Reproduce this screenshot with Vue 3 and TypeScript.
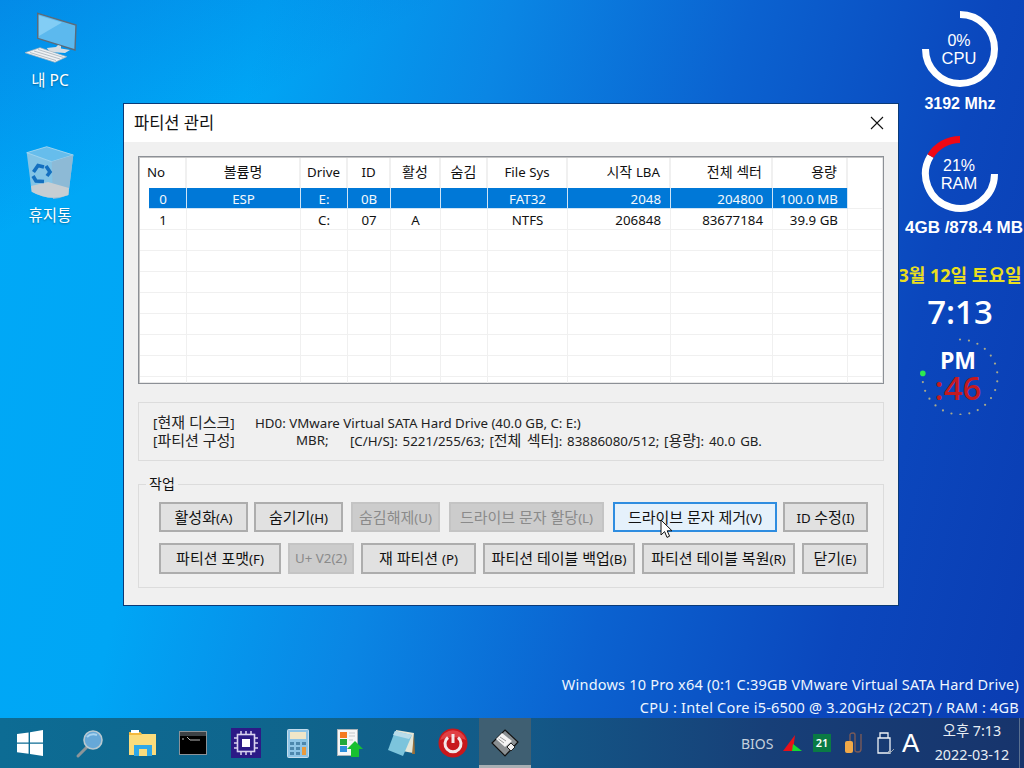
<script setup lang="ts">
import { h } from "vue";

interface Col { title: string; align: string }
interface Btn { label: string; width: number; gap: number; disabled?: boolean; hover?: boolean }

const cols: Col[] = [
  { title: "No", align: "no" },
  { title: "볼륨명", align: "center" },
  { title: "Drive", align: "center" },
  { title: "ID", align: "center" },
  { title: "활성", align: "center" },
  { title: "숨김", align: "center" },
  { title: "File Sys", align: "center" },
  { title: "시작 LBA", align: "right" },
  { title: "전체 섹터", align: "right" },
  { title: "용량", align: "right" },
  { title: "", align: "center" },
]

const rows: string[][] = [
  ["0", "ESP", "E:", "0B", "", "", "FAT32", "2048", "204800", "100.0 MB", ""],
  ["1", "", "C:", "07", "A", "", "NTFS", "206848", "83677184", "39.9 GB", ""],
  ...Array.from({ length: 8 }, () => Array(11).fill("")),
]

const topButtons: Btn[] = [
  { label: "활성화(A)", width: 89, gap: 0 },
  { label: "숨기기(H)", width: 89, gap: 6 },
  { label: "숨김해제(U)", width: 89, gap: 8, disabled: true },
  { label: "드라이브 문자 할당(L)", width: 155, gap: 9, disabled: true },
  { label: "드라이브 문자 제거(V)", width: 164, gap: 9, hover: true },
  { label: "ID 수정(I)", width: 85, gap: 6 },
]
const bottomButtons: Btn[] = [
  { label: "파티션 포맷(F)", width: 122, gap: 0 },
  { label: "U+ V2(2)", width: 66, gap: 7, disabled: true },
  { label: "재 파티션 (P)", width: 115, gap: 7 },
  { label: "파티션 테이블 백업(B)", width: 152, gap: 7 },
  { label: "파티션 테이블 복원(R)", width: 153, gap: 7 },
  { label: "닫기(E)", width: 66, gap: 7 },
]

// hangul sits larger than latin in the dialog font, so runs get their own span
const T = (props: { text: string }) =>
  (props.text.match(/[가-힣][가-힣 ]*|[^가-힣]+/g) ?? []).map((s) =>
    /[가-힣]/.test(s) ? h("span", { class: "ko" }, s) : s,
  )
T.props = ["text"]

// second-hand dots, the green one sits on the current second
const dots = Array.from({ length: 20 }, (_, i) => {
  const a = (i * 13.8 * Math.PI) / 180
  return { x: 38 + 37.5 * Math.sin(a), y: 38 - 37.5 * Math.cos(a) }
})
</script>

<template>
  <div class="desktop">
    <div class="desk-icon pc">
      <svg width="64" height="56" viewBox="0 0 64 56">
        <path d="M19.7 3.3 L58 15 L57 40 L19.7 28.3Z" fill="#5cb9ee" stroke="#5b6b7a" stroke-width="1.4" />
        <path d="M21 5.5 L44 12.5 L21 26Z" fill="#82cdf5" />
        <path d="M28.7 38 L38 37 L40 35 L43 36 V38.5 L52 40 L47 43 L32 42Z" fill="#d5dde3" />
        <path d="M7 42.7 L22 37.7 L48.7 46.7 L37 52.3Z" fill="#eef1f4" stroke="#aab4bc" stroke-width=".7" />
        <path d="M12 42.5 L38 50.5 M16 41 L42 49 M20 39.5 L45.5 47.5" stroke="#aeb8c0" stroke-width=".9" />
      </svg>
      <span>내 PC</span>
    </div>
    <div class="desk-icon bin">
      <svg width="64" height="58" viewBox="0 0 64 58">
        <path d="M8.7 8.7 L28.7 2.7 L55.3 11 L50.3 51 Q32 58 13.7 47.7Z" fill="#83c4e6" />
        <path d="M8.7 8.7 L28.7 2.7 L55.3 11 L33.7 17.7Z" fill="#66bdec" stroke="#a8d8f0" stroke-width=".8" />
        <path d="M33.7 17.7 L55.3 11 L50.3 51 Q42 54.5 35 55Z" fill="#8dbad6" />
        <path d="M13 42 L30 38 L51 44 L50.3 51 Q32 58 13.7 47.7Z" fill="#c6ced3" />
        <g fill="none" stroke="#1470c0" stroke-width="3.6">
          <path d="M15.5 28 L20 21.5 L26 23" />
          <path d="M28 22 L32 28 L29 32" />
          <path d="M26 37.5 L18 37 L15 32" />
        </g>
      </svg>
      <span>휴지통</span>
    </div>

    <aside class="gadgets">
      <div class="gauge">
        <svg width="80" height="80" viewBox="0 0 80 80">
          <path d="M40 5.5 A34.5 34.5 0 1 1 5.5 40" fill="none" stroke="#fff" stroke-width="7" />
        </svg>
        <div class="gauge-text"><span>0%</span><span class="big">CPU</span></div>
      </div>
      <div class="gauge-label first">3192 Mhz</div>
      <div class="gauge ram">
        <svg width="80" height="80" viewBox="0 0 80 80">
          <path d="M74.5 40 A34.5 34.5 0 1 1 10.5 22" fill="none" stroke="#fff" stroke-width="7" />
          <path d="M10.5 22 A34.5 34.5 0 0 1 40 5.5" fill="none" stroke="#f00814" stroke-width="7" />
        </svg>
        <div class="gauge-text"><span>21%</span><span class="big">RAM</span></div>
      </div>
      <div class="gauge-label second">4GB /878.4 MB</div>
      <div class="date">3월 12일 토요일</div>
      <div class="time">7:13</div>
      <div class="seconds">
        <svg width="76" height="76" viewBox="0 0 76 76">
          <circle v-for="(d, i) in dots" :key="i" :cx="d.x" :cy="d.y" r="1.1" fill="#a9a98a" />
          <circle cx="0.8" cy="34.4" r="2.8" fill="#2eea4e" />
        </svg>
        <div class="sec-text"><span class="pm">PM</span><span class="sec">:46</span></div>
      </div>
    </aside>

    <section class="dialog">
      <header class="title-bar">
        <span>파티션 관리</span>
        <svg width="14" height="14" viewBox="0 0 14 14"><path d="M1 1 L13 13 M13 1 L1 13" stroke="#111" stroke-width="1.1" /></svg>
      </header>
      <div class="dialog-body">
        <div class="list">
          <div class="list-head">
            <div v-for="c in cols" :key="c.title" :class="['cell', c.align]"><T :text="c.title" /></div>
          </div>
          <div v-for="(row, r) in rows" :key="r" class="list-row" :class="{ selected: r === 0 }">
            <div v-for="(v, i) in row" :key="i" :class="['cell', cols[i].align]">{{ v }}</div>
          </div>
        </div>

        <div class="info">
          <div class="info-labels">
            <div><T text="[현재 디스크]" /></div>
            <div><T text="[파티션 구성]" /></div>
          </div>
          <div>
            <div>HD0: VMware Virtual SATA Hard Drive (40.0 GB, C: E:)</div>
            <div class="info-line"><span class="mbr">MBR;</span><span><T text="[C/H/S]: 5221/255/63; [전체 섹터]: 83886080/512; [용량]: 40.0 GB." /></span></div>
          </div>
        </div>

        <fieldset class="actions">
          <legend><T text="작업" /></legend>
          <div class="btn-row">
            <button v-for="b in topButtons" :key="b.label" class="btn" :class="{ off: b.disabled, hover: b.hover }" :style="{ width: b.width + 'px', marginLeft: b.gap + 'px' }"><T :text="b.label" /></button>
          </div>
          <div class="btn-row tall">
            <button v-for="b in bottomButtons" :key="b.label" class="btn" :class="{ off: b.disabled }" :style="{ width: b.width + 'px', marginLeft: b.gap + 'px' }"><T :text="b.label" /></button>
          </div>
        </fieldset>
      </div>
    </section>

    <svg class="cursor" width="14" height="20" viewBox="0 0 14 20">
      <path d="M1 1 V16 L4.6 12.6 L7 18.4 L9.6 17.2 L7.2 11.8 H12Z" fill="#fff" stroke="#111" stroke-width="1" />
    </svg>

    <div class="sysinfo">
      <div>Windows 10 Pro x64 (0:1 C:39GB VMware Virtual SATA Hard Drive)</div>
      <div>CPU : Intel Core i5-6500 @ 3.20GHz (2C2T) / RAM : 4GB</div>
    </div>

    <footer class="taskbar">
      <div class="start">
        <svg width="26" height="26" viewBox="0 0 26 26">
          <path d="M0 4 L11.6 2.4 V12.4 H0Z M13 2.2 L26 0 V12.4 H13Z M0 13.8 H11.6 V23.8 L0 22.2Z M13 13.8 H26 V26 L13 24Z" fill="#fff" />
        </svg>
      </div>
      <div class="task">
        <svg width="32" height="32" viewBox="0 0 32 32">
          <path d="M12 20 L3 29" stroke="#8d9599" stroke-width="3" stroke-linecap="round" />
          <circle cx="18" cy="13" r="9" fill="#66a8d8" stroke="#b8c8d0" stroke-width="1.6" />
          <path d="M12 10 Q16 6 22 8" stroke="#a8d4f0" stroke-width="2" fill="none" />
        </svg>
      </div>
      <div class="task">
        <svg width="30" height="28" viewBox="0 0 30 28">
          <path d="M1 3 H12 L14 5 H28 V26 H1Z" fill="#fbdc7c" />
          <path d="M1 3 H12 L14 6 H1Z" fill="#f4b93e" />
          <rect x="3" y="1" width="8" height="3" fill="#fff" />
          <path d="M6 27 V16 H24 V27 H19 V20 H11 V27Z" fill="#2fa8e8" />
          <rect x="11" y="20" width="8" height="7" fill="#fbdc7c" />
        </svg>
      </div>
      <div class="task">
        <svg class="cmd" width="28" height="24" viewBox="0 0 28 24">
          <rect x=".5" y=".5" width="27" height="23" fill="#000" stroke="#8a9298" />
          <rect x="1" y="1" width="26" height="4" fill="#3d4246" />
          <path d="M3 8 H5 M8 6 L11 9 H21" stroke="#b8b8b8" stroke-width="1" fill="none" />
        </svg>
      </div>
      <div class="task">
        <svg width="30" height="30" viewBox="0 0 30 30">
          <rect width="30" height="30" fill="#2c1a86" />
          <rect x="6.5" y="6.5" width="17" height="17" fill="none" stroke="#d9d2f0" stroke-width="1.6" />
          <rect x="11" y="11" width="8" height="8" fill="#fff" />
          <path d="M10 3 V6 M15 3 V6 M20 3 V6 M10 24 V27 M15 24 V27 M20 24 V27 M3 10 H6 M3 15 H6 M3 20 H6 M24 10 H27 M24 15 H27 M24 20 H27" stroke="#d9d2f0" stroke-width="1.5" />
        </svg>
      </div>
      <div class="task">
        <svg width="22" height="29" viewBox="0 0 22 29">
          <rect x=".5" y=".5" width="21" height="28" rx="1" fill="#8ec4e6" stroke="#c4dcec" />
          <rect x="3" y="3" width="16" height="7" fill="#f0e6c8" />
          <path d="M3 13 H7 V16 H3Z M9 13 H13 V16 H9Z M15 13 H19 V16 H15Z M3 18 H7 V21 H3Z M9 18 H13 V21 H9Z M3 23 H7 V26 H3Z M9 23 H13 V26 H9Z" fill="#4d87ad" />
          <rect x="15" y="18" width="4" height="8" fill="#e89a3c" />
        </svg>
      </div>
      <div class="task">
        <svg width="26" height="28" viewBox="0 0 26 28">
          <rect x=".5" y=".5" width="20" height="26" fill="#f5f6f7" stroke="#a9b2b8" />
          <rect x="3" y="3" width="7" height="6" fill="#f47a20" />
          <rect x="3" y="10" width="7" height="6" fill="#20a83c" />
          <rect x="3" y="17" width="7" height="6" fill="#2d8fdc" />
          <path d="M12 4 H18 M12 7 H18 M12 11 H16" stroke="#c4c9cd" />
          <path d="M18 12 L26 20 H22 V28 H14 V20 H10Z" fill="#18c030" />
        </svg>
      </div>
      <div class="task">
        <svg width="30" height="30" viewBox="0 0 30 30">
          <path d="M9 2 L27 5 L26 25 L10 22Z" fill="#e4e6d8" />
          <path d="M27 5 L28 26 L25 26Z" fill="#99703a" />
          <path d="M8 3 L25 7 L16 28 L1 22Z" fill="#7cc4dc" />
          <path d="M8 3 L25 7 L22 11 L6 7Z" fill="#b8dcea" />
        </svg>
      </div>
      <div class="task">
        <svg width="30" height="30" viewBox="0 0 30 30">
          <circle cx="15" cy="15" r="14.5" fill="#c8181c" />
          <path d="M2 12 A13.5 13.5 0 0 1 28 12 Q15 6 2 12Z" fill="#e04044" />
          <path d="M10 9.5 A8 8 0 1 0 20 9.5" fill="none" stroke="#f4e8e8" stroke-width="3" />
          <path d="M15 6 V15" stroke="#f4e8e8" stroke-width="3" />
        </svg>
      </div>
      <div class="task active">
        <svg width="28" height="28" viewBox="0 0 28 28">
          <path d="M14 1 L27 13 L14 27 L1 14Z" fill="#8a8f92" stroke="#111" stroke-width="1.2" />
          <path d="M11 4 L21 12 L14 18 L5 10Z" fill="#f4f4f4" />
          <path d="M9 8 L15 12 M7.5 10 L13 14" stroke="#999" />
          <path d="M16 18 L20 14 L24 18 L20 22Z" fill="#f0f0f0" stroke="#222" />
        </svg>
      </div>

      <div class="tray">
        <span class="bios">BIOS</span>
        <svg class="t-net" width="20" height="18" viewBox="0 0 20 18">
          <path d="M0 17 L12 1 L10 17Z" fill="#e81018" />
          <path d="M10 10 L19 17 H9Z" fill="#18d830" />
        </svg>
        <span class="t-cal">21</span>
        <svg class="t-plug" width="18" height="22" viewBox="0 0 18 22">
          <path d="M6 9 V3 Q6 1 9 1 Q11 1 11 3 V18 Q11 20 14 20 Q17 20 17 17 V2" fill="none" stroke="#7a5a58" stroke-width="1.4" />
          <rect x="1" y="9" width="8" height="12" rx="2" fill="#f0a848" />
        </svg>
        <svg class="t-usb" width="18" height="22" viewBox="0 0 18 22">
          <path d="M3 1 H11 V6 H13 V21 H1 V6 H3Z M1 6 H13" fill="none" stroke="#eef2f6" stroke-width="1.3" />
          <path d="M11 19 L13 21 L17 17" fill="none" stroke="#9aa4b0" />
        </svg>
        <span class="t-a">A</span>
        <div class="clock"><div>오후 7:13</div><div>2022-03-12</div></div>
        <div class="desk-edge"></div>
      </div>
    </footer>
  </div>
</template>

<style>
html, body { margin: 0; padding: 0; background: #0a6ad0; }
.ko { font-size: 14px; }
.btn .ko, .info-labels .ko, .info-line .ko { font-size: 15px; }
</style>

<style scoped>
.desktop {
  position: relative;
  width: 1024px;
  height: 768px;
  overflow: hidden;
  font-family: "Noto Sans", "Noto Sans CJK KR", sans-serif;
  background:
    linear-gradient(152deg, rgba(10,60,190,.28) 0%, rgba(10,60,190,0) 18%),
    linear-gradient(104deg, #00a9f7 0%, #00a6f5 22%, #0a86e4 42%, #0b62d0 62%, #0b47bd 82%, #0a3cb2 100%);
}
.desk-icon {
  position: absolute;
  left: 0;
  width: 100px;
  display: flex;
  flex-direction: column;
  align-items: center;
  color: #fff;
  font-size: 15.5px;
  line-height: 20px;
  text-shadow: 0 1px 2px rgba(0, 0, 0, .35);
}
.desk-icon.pc { top: 10px; }
.desk-icon.bin { top: 144px; }
.desk-icon.pc span { margin-top: 4px; }
.desk-icon.bin span { margin-top: 3px; }

.gadgets {
  position: absolute;
  right: 0;
  top: 0;
  width: 124px;
  box-sizing: border-box;
  padding-right: 4px;
  display: flex;
  flex-direction: column;
  align-items: center;
  overflow: hidden;
  color: #fff;
}
.gauge {
  position: relative;
  flex: none;
  width: 80px;
  height: 80px;
  margin-top: 9px;
}
.gauge svg { display: block; }
.gauge-text {
  position: absolute;
  inset: 1px 2px 0 0;
  display: flex;
  flex-direction: column;
  align-items: center;
  justify-content: center;
  font-family: "Liberation Sans", sans-serif;
  font-size: 16px;
  line-height: 17px;
}
.gauge-text .big { font-size: 16.5px; line-height: 18px; }
.gauge.ram { margin-top: 21px; }
.gauge-label {
  font-family: "Liberation Sans", sans-serif;
  font-weight: 700;
  font-size: 16px;
  line-height: 18px;
  white-space: nowrap;
  margin-top: 6px;
}
.gauge-label.second { font-size: 17px; margin-top: 5px; margin-left: 8px; }
.date {
  margin-top: 28px;
  color: #eadf1e;
  font-weight: 700;
  font-size: 18px;
  line-height: 20px;
  white-space: nowrap;
}
.time {
  margin-top: 9px;
  font-family: "Open Sans", sans-serif;
  font-weight: 600;
  font-size: 33px;
  line-height: 36px;
}
.seconds {
  position: relative;
  flex: none;
  width: 76px;
  height: 76px;
  margin-top: 9px;
}
.seconds svg { display: block; overflow: visible; }
.sec-text {
  position: absolute;
  inset: 0 4px 0 0;
  display: flex;
  flex-direction: column;
  align-items: center;
}
.pm {
  margin-top: 8px;
  font-size: 23px;
  line-height: 26px;
  font-weight: 700;
  font-family: "Open Sans", sans-serif;
}
.sec {
  font-size: 33px;
  line-height: 30px;
  font-weight: 600;
  color: #c41a20;
  font-family: "Open Sans", sans-serif;
}

.dialog {
  position: absolute;
  left: 123px;
  top: 103px;
  width: 776px;
  height: 503px;
  box-sizing: border-box;
  border: 1px solid #0a3a78;
  background: #f0f0f0;
  display: flex;
  flex-direction: column;
  font-size: 13.3px;
  color: #111;
}
.title-bar {
  height: 38px;
  flex: none;
  box-sizing: border-box;
  background: #fff;
  display: flex;
  align-items: center;
  justify-content: space-between;
  padding: 0 14px 0 10px;
}
.title-bar span { font-size: 16.5px; margin-top: -3px; }
.dialog-body {
  padding: 14px 14px 0;
  display: flex;
  flex-direction: column;
}
.list {
  height: 228px;
  box-sizing: border-box;
  border: 1px solid #8c9096;
  padding: 1px;
  box-shadow: inset 1px 1px 0 #c4c4c4, inset -1px -1px 0 #e8e8e8;
  background: #fff;
  overflow: hidden;
}
.list-head, .list-row {
  display: grid;
  grid-template-columns: 47px 114px 47px 43px 50px 47px 80px 103px 102px 75px 34px;
}
.list-head { height: 30px; }
.list-head .cell {
  border-right: 2px solid #f0f0f0;
  line-height: 28px;
  height: 30px;
}
.list-head .cell:last-child { border-right: none; }
.list-head .no { text-align: left; padding-left: 7px; }
.list-row { height: 21px; }
.cell {
  box-sizing: border-box;
  line-height: 22px;
  white-space: nowrap;
  overflow: hidden;
  padding-right: 8px;
}
.list-head .center { padding-right: 0; }
.center { text-align: center; padding-right: 0; }
.right { text-align: right; padding-right: 9px; }
.no { text-align: center; padding-right: 0; }
.list-row .cell {
  border-right: 1px solid #f0f0f0;
  border-bottom: 1px solid #f0f0f0;
}
.list-row .cell:last-child { border-right: none; }
.list-row.selected .cell { background: #0078d7; color: #f4f8fc; border-color: #cfe4f6; }
.list-row.selected .cell:first-child { margin-left: 9px; padding-right: 9px; }
.list-row.selected .cell:last-child { background: #fff; border-bottom-color: #f0f0f0; }

.info {
  height: 59px;
  margin-top: 18px;
  box-sizing: border-box;
  border: 1px solid #dcdcdc;
  display: flex;
  align-items: center;
  padding: 1px 14px 0;
  line-height: 17px;
  color: #222;
}
.info-labels { width: 102px; flex: none; }
.info-line { display: flex; word-spacing: 1.4px; }
.mbr { margin-left: 41px; width: 54px; }

.actions {
  margin: 15px 0 0;
  height: 112px;
  box-sizing: border-box;
  border: 1px solid #dcdcdc;
  padding: 10px 15px 0 20px;
  min-width: 0;
}
.actions legend {
  margin-left: -13px;
  padding: 0 3px;
  line-height: 16px;
}
.btn-row {
  display: flex;
  height: 30px;
}
.btn-row.tall { height: 31px; margin-top: 11px; }
.btn {
  box-sizing: border-box;
  flex: none;
  border: 2px solid #adadad;
  background: #e1e1e1;
  font: inherit;
  color: #111;
  padding: 0 0 2px;
  white-space: nowrap;
}
.btn.off { border-color: #c4c4c4; background: #cccccc; color: #8a8a8a; }
.btn.hover { border-color: #2f8de0; background: #e5f1fb; }

.cursor { position: absolute; left: 660px; top: 519px; }

.sysinfo {
  position: absolute;
  right: 5px;
  top: 673px;
  text-align: right;
  color: #eef6ff;
  font-size: 14.5px;
  line-height: 23px;
  letter-spacing: .21px;
  white-space: nowrap;
}

.taskbar {
  position: absolute;
  left: 0;
  right: 0;
  bottom: 0;
  height: 50px;
  display: flex;
  background: linear-gradient(90deg, #0d6c94 0%, #0f648c 30%, #135a88 50%, #173f78 75%, #17346c 100%);
}
.start {
  width: 65px;
  flex: none;
  padding-left: 17px;
  box-sizing: border-box;
  display: flex;
  align-items: center;
}
.task {
  width: 51.8px;
  flex: none;
  display: flex;
  align-items: center;
  justify-content: center;
  box-sizing: border-box;
}
.cmd { margin-right: 3px; }
.task.active {
  background: #3f5f72;
  border-bottom: 3px solid #a9b0b4;
  padding-top: 2px;
}
.tray {
  margin-left: auto;
  display: flex;
  align-items: center;
  color: #e8eef4;
}
.bios { font-size: 14px; color: #c4d0dc; width: 42px; }
.t-net { margin-right: 10px; }
.t-cal {
  width: 18px;
  height: 18px;
  background: #0a7a44;
  color: #fff;
  font-size: 11px;
  font-weight: 600;
  line-height: 18px;
  text-align: center;
  margin-right: 13px;
}
.t-plug { margin-right: 15px; }
.t-usb { margin-right: 7px; }
.t-a { font-size: 26px; width: 19px; font-family: "Liberation Sans", sans-serif; color: #fff; }
.clock {
  width: 88px;
  margin-left: 7px;
  text-align: center;
  font-size: 14.3px;
  line-height: 24px;
  white-space: nowrap;
}
.desk-edge { width: 1px; height: 50px; background: #5a7090; margin-left: 3px; margin-right: 4px; }
</style>
